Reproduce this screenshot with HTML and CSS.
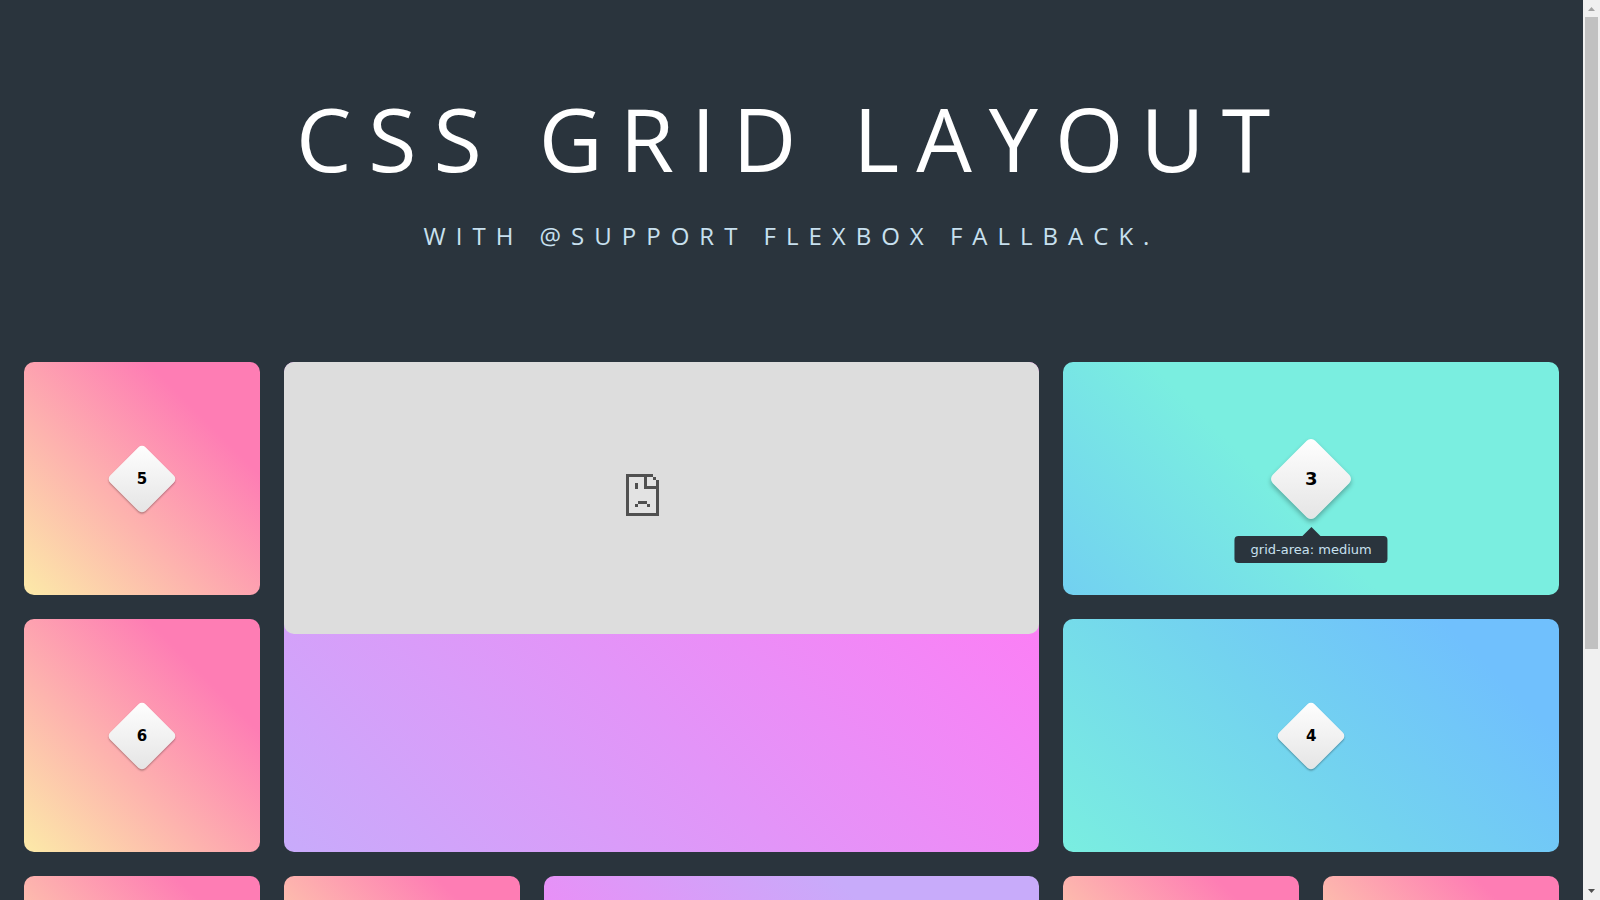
FILE: index.html
```html
<!DOCTYPE html>
<html lang="en">
<head>
<meta charset="utf-8">
<title>CSS Grid Layout</title>
<link rel="stylesheet" href="styles.css">
</head>
<body>
<div class="viewport">
  <main class="page">
    <header class="hero">
      <h1 class="title">CSS Grid Layout</h1>
      <p class="subtitle">with @support flexbox fallback.</p>
    </header>
    <section class="grid">
      <div class="card small"><button class="badge" type="button">5</button></div>
      <div class="card large">
        <div class="frame">
          <svg class="sad" width="33" height="42" viewBox="0 0 11 14" shape-rendering="crispEdges" role="img" aria-label="Page unavailable">
            <path fill="#e3e3e3" d="M1 1h8v1h1v11H1z"/>
            <path fill="#505050" d="M0 0h9v1H7v3h3V2h1v12H0zM1 1v12h9V5H6V1zM9 1h1v1H9zM3 3h1v2H3zM4 9h3v1H4zM3 10h1v1H3zM7 10h1v1H7z"/>
          </svg>
        </div>
      </div>
      <div class="card medium aqua">
        <div class="hint">
          <button class="badge active" type="button" aria-describedby="tip">3</button>
          <span class="tip" id="tip" role="tooltip">grid-area: medium</span>
        </div>
      </div>
      <div class="card small"><button class="badge" type="button">6</button></div>
      <div class="card medium blue"><button class="badge" type="button">4</button></div>
      <div class="card small late"></div>
      <div class="card small late"></div>
      <div class="card medium violet"></div>
      <div class="card small late"></div>
      <div class="card small late"></div>
    </section>
  </main>
  <div class="scrollbar" aria-hidden="true">
    <svg class="arrow" width="17" height="17" viewBox="0 0 17 17"><path fill="#a3a3a3" d="M5 11h7L8.500 7z"/></svg>
    <div class="track"><div class="thumb"></div></div>
    <svg class="arrow" width="17" height="17" viewBox="0 0 17 17"><path fill="#505050" d="M5 6h7l-3.500 4z"/></svg>
  </div>
</div>
</body>
</html>
```

FILE: styles.css
```css
* { box-sizing: border-box; }

body {
  margin: 0;
  background: #2a343d;
  font-family: "DejaVu Sans", Verdana, sans-serif;
}

.viewport {
  display: flex;
  height: 100vh;
  overflow: hidden;
}

.page {
  flex: 1;
  min-width: 0;
}

.hero {
  padding: 90px 24px 86px;
  text-align: center;
  text-transform: uppercase;
  font-family: "Open Sans", "Segoe UI", sans-serif;
}

.title {
  margin: 0 0 34px;
  font-size: 88px;
  line-height: 96px;
  font-weight: 400;
  letter-spacing: 17px;
  color: #fff;
}

.subtitle {
  margin: 0;
  font-size: 24px;
  line-height: 32px;
  letter-spacing: 10px;
  color: #c8e0ef;
}

.grid {
  display: grid;
  grid-template-columns: repeat(6, 1fr);
  grid-auto-rows: 233px;
  gap: 24px;
  padding: 24px;
}

.card {
  display: flex;
  align-items: center;
  justify-content: center;
  border-radius: 10px;
}

.small { background: linear-gradient(45deg, #fceaa8, #fe7db4 76%); }
.late { background: linear-gradient(45deg, #fceaa8 16%, #fe7db4 82%); }

.large {
  grid-column: span 3;
  grid-row: span 2;
  align-items: flex-start;
  background: linear-gradient(45deg, #c8abfb, #fd7ef5 81%);
}

.medium { grid-column: span 2; }
.aqua { background: linear-gradient(45deg, #72d0f1, #7aeee0 44%); }
.blue { background: linear-gradient(45deg, #7aeee0, #73d3ef 48%, #70c0fd 84%); }
.violet { background: linear-gradient(45deg, #fd7ef5, #c8abfa 72%); }

.frame {
  display: flex;
  flex: 1;
  align-items: center;
  justify-content: center;
  height: 272px;
  padding: 0 38px 6px 0;
  border-radius: 10px;
  background: #dddddd;
}

.sad { display: block; }

.badge {
  position: relative;
  z-index: 0;
  display: block;
  width: 50px;
  height: 50px;
  padding: 0;
  border: 0;
  background: none;
  color: #000;
  font: bold 15px "DejaVu Sans", Verdana, sans-serif;
}

.badge::before {
  content: "";
  position: absolute;
  inset: 0;
  z-index: -1;
  border-radius: 5px;
  background: linear-gradient(135deg, #fff, #e4e4e4);
  box-shadow: 1px 1px 2px rgba(0, 0, 0, 0.3);
  transform: rotate(45deg);
}

.badge.active {
  width: 60px;
  height: 60px;
  font-size: 18px;
}

.badge.active::before {
  border-radius: 6px;
  box-shadow: 2px 2px 5px rgba(0, 0, 0, 0.3);
}

.hint { position: relative; }

.tip {
  position: absolute;
  top: 87px;
  left: 50%;
  transform: translateX(-50%);
  padding: 0 16px;
  border-radius: 4px;
  background: #2a343d;
  color: #c8e0ef;
  font-size: 13px;
  line-height: 27px;
  white-space: nowrap;
}

.tip::before {
  content: "";
  position: absolute;
  bottom: 100%;
  left: 50%;
  margin-left: -9px;
  border: 9px solid transparent;
  border-top: 0;
  border-bottom-color: #2a343d;
}

.scrollbar {
  display: flex;
  flex-direction: column;
  width: 17px;
  background: #f0f0f0;
}

.arrow { display: block; }

.track {
  flex: 1;
  padding: 0 2px;
}

.thumb {
  height: 73%;
  background: #c1c1c1;
}
```
